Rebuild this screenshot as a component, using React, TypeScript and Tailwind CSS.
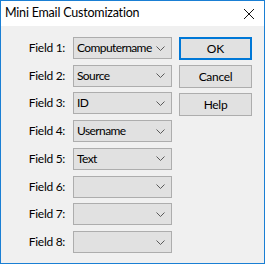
import React from 'react';

const fields = ['Computername', 'Source', 'ID', 'Username', 'Text', '', '', ''];

const Chevron = () => (
  <svg width="9" height="5" viewBox="0 0 9 5" className="shrink-0">
    <path d="M0.5 0.5 L4.5 4.5 L8.5 0.5" fill="none" stroke="#5a5a5a" strokeWidth="1" />
  </svg>
);

const Combo = ({ value }: { value: string }) => (
  <div className="w-[99px] h-[22px] border border-[#adadad] bg-[#e1e1e1] flex items-center justify-between pl-[3px] pr-[6px]">
    <span className="text-[12px] leading-none tracking-[-0.6px] text-black">{value}</span>
    <Chevron />
  </div>
);

const DlgButton = ({ label, primary }: { label: string; primary?: boolean }) => (
  <button
    className={
      primary
        ? 'w-[73px] h-[23px] border-2 border-[#0078d7] bg-[#e1e1e1] text-[12px] text-black flex items-center justify-center'
        : 'w-[73px] h-[23px] border border-[#adadad] bg-[#e1e1e1] text-[12px] tracking-[-0.3px] text-black flex items-center justify-center'
    }
  >
    {label}
  </button>
);

export default function App() {
  return (
    <div
      className="w-[265px] h-[264px] border border-[#1a7fd4] bg-[#f0f0f0] flex flex-col"
      style={{ fontFamily: 'Lato, "Noto Sans", sans-serif' }}
    >
      <div className="h-[25px] bg-white flex items-center justify-between pl-[4px] pr-[10px] shrink-0">
        <span className="text-[12.5px] tracking-[-0.2px] text-black">Mini Email Customization</span>
        <svg width="10" height="10" viewBox="0 0 10 10">
          <path d="M0 0 L10 10 M10 0 L0 10" stroke="#111" strokeWidth="1" />
        </svg>
      </div>
      <div className="flex pt-[11px]">
        <div className="flex flex-col gap-[5.72px]">
          {fields.map((f, i) => (
            <div key={i} className="flex items-center">
              <span className="w-[64px] text-right text-[12px] tracking-[-0.3px] text-black">Field {i + 1}:</span>
              <div className="ml-[8px]">
                <Combo value={f} />
              </div>
            </div>
          ))}
        </div>
        <div className="ml-[7px] flex flex-col gap-[5px]">
          <DlgButton label="OK" primary />
          <DlgButton label="Cancel" />
          <DlgButton label="Help" />
        </div>
      </div>
    </div>
  );
}
